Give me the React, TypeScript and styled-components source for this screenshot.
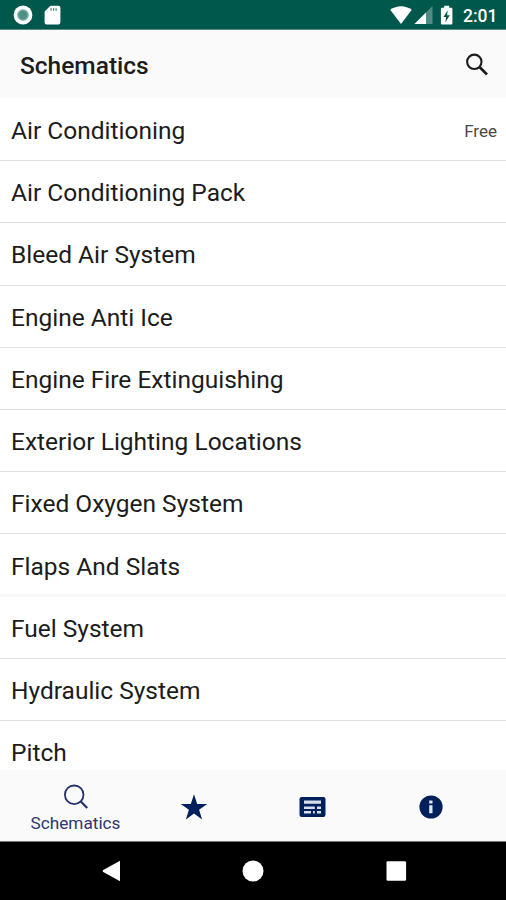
import React from "react";
import styled, { createGlobalStyle } from "styled-components";

const GlobalStyle = createGlobalStyle`
  * { box-sizing: border-box; }
  body { margin: 0; background: #fff; font-family: Roboto, "Noto Sans", sans-serif; }
`;

const Screen = styled.div`
  width: 506px;
  height: 900px;
  display: flex;
  flex-direction: column;
  overflow: hidden;
  background: #fff;
  color: #1c1c1c;
`;

const StatusBar = styled.header`
  flex: 0 0 30px;
  display: flex;
  align-items: center;
  justify-content: space-between;
  padding: 0 10px 0 13px;
  background: #00574b;
  border-bottom: 1px solid #5d8e86;
  color: #fff;
`;

const StatusGroup = styled.div<{ $gap: number }>`
  display: flex;
  align-items: center;
  gap: ${(p) => p.$gap}px;
  svg { display: block; }
`;

const Clock = styled.time`
  width: 33px;
  margin-left: 7px;
  padding-top: 2px;
  font-size: 17.5px;
  font-weight: 500;
  line-height: 20px;
  white-space: nowrap;
`;

const AppBar = styled.div`
  flex: 0 0 68px;
  display: flex;
  align-items: center;
  justify-content: space-between;
  padding: 3px 17px 0 20px;
  background: #fafafa;
`;

const Title = styled.h1`
  margin: 0;
  font-size: 24.5px;
  font-weight: 500;
  line-height: 32px;
`;

const IconButton = styled.button`
  display: flex;
  padding: 0;
  margin-top: -2px;
  border: 0;
  background: none;
  color: #1c1c1c;
`;

const List = styled.ul`
  flex: 1 1 0;
  min-height: 0;
  margin: 0;
  padding: 1px 0 0;
  overflow: hidden;
  list-style: none;
`;

const Row = styled.li<{ $soft?: boolean }>`
  display: flex;
  align-items: center;
  justify-content: space-between;
  height: 62.2px;
  padding: ${(p) => (p.$soft ? "6px" : "3px")} 9px 0 11px;
  border-bottom: ${(p) => (p.$soft ? "3px solid #f7f7f7" : "1px solid #e0e0e0")};
  font-size: 24.5px;
  line-height: 32px;
`;

const Name = styled.span`
  white-space: nowrap;
`;

const Tag = styled.span`
  font-size: 17px;
  color: #484848;
`;

const TabBar = styled.nav`
  flex: 0 0 72px;
  display: grid;
  grid-template-columns: 151px 86px 151px 86px;
  background: #fafafa;
  border-bottom: 1px solid #777;
`;

const Tab = styled.button<{ $active?: boolean }>`
  display: flex;
  flex-direction: column;
  align-items: center;
  justify-content: center;
  gap: 3px;
  padding: ${(p) => (p.$active ? "6px" : "2px")} 0 0;
  border: 0;
  background: none;
  color: #00205b;
  font-family: inherit;
  svg { display: block; }
`;

const TabLabel = styled.span`
  font-size: 17.2px;
  line-height: 20px;
  color: #2c386f;
`;

const SystemBar = styled.footer`
  flex: 0 0 58px;
  display: grid;
  grid-template-columns: 182px 142px 182px;
  align-items: center;
  background: #000;
`;

const SystemKey = styled.div<{ $side?: "left" | "right" }>`
  display: flex;
  justify-content: ${(p) => (p.$side === "left" ? "flex-end" : p.$side === "right" ? "flex-start" : "center")};
  padding: ${(p) => (p.$side === "left" ? "0 61px 0 0" : p.$side === "right" ? "0 0 0 62px" : "0")};
`;

const items: { name: string; tag?: string; soft?: boolean }[] = [
  { name: "Air Conditioning", tag: "Free" },
  { name: "Air Conditioning Pack" },
  { name: "Bleed Air System" },
  { name: "Engine Anti Ice" },
  { name: "Engine Fire Extinguishing" },
  { name: "Exterior Lighting Locations" },
  { name: "Fixed Oxygen System" },
  { name: "Flaps And Slats", soft: true },
  { name: "Fuel System" },
  { name: "Hydraulic System" },
  { name: "Pitch" },
];

export default function App() {
  return (
    <>
      <GlobalStyle />
      <Screen>
        <StatusBar>
          <StatusGroup $gap={11}>
            <svg width="20" height="20" viewBox="0 0 20 20">
              <circle cx="10" cy="10" r="9.4" fill="#fff" />
              <circle cx="10" cy="10" r="5.8" fill="#76aaa1" />
              <circle cx="10" cy="10" r="4.2" fill="#4d9184" />
            </svg>
            <svg width="17" height="20" viewBox="0 0 17 20">
              <path d="M6.5.8h8A2 2 0 0 1 16.4 2.8v14.6a2 2 0 0 1-2 2H2.6a2 2 0 0 1-2-2V6.5z" fill="#fff" />
              <path d="M6.4 3.2h1.3v2.6H6.4zM9 3.2h1.3v2.6H9zM11.5 3.2h1.3v2.6h-1.3z" fill="#4e897f" />
            </svg>
          </StatusGroup>
          <StatusGroup $gap={2}>
            <svg width="22" height="20" viewBox="0 0 22 20">
              <path d="M.2 4.8C6.5.1 15.5.1 21.8 4.8L11 19z" fill="#fff" />
            </svg>
            <svg width="19" height="20" viewBox="0 0 19 20">
              <path d="M18.5 1v18H.5z" fill="#4d8d83" />
              <path d="M12 7.5V19H.5z" fill="#fff" />
            </svg>
            <svg width="19" height="20" viewBox="0 0 19 20">
              <path d="M9.2.8h5v2h2a1.2 1.2 0 0 1 1.2 1.2v14.2a1.2 1.2 0 0 1-1.2 1.2H7.1a1.2 1.2 0 0 1-1.2-1.2V4a1.2 1.2 0 0 1 1.2-1.2h2.1z" fill="#fff" />
              <path d="M12.7 5.2 8.5 12h2.6l-.7 5.2 4.4-7h-2.7z" fill="#00574b" />
            </svg>
            <Clock>2:01</Clock>
          </StatusGroup>
        </StatusBar>
        <AppBar>
          <Title>Schematics</Title>
          <IconButton aria-label="Search">
            <svg width="24" height="24" viewBox="0 0 24 24" fill="none" stroke="currentColor">
              <circle cx="9.3" cy="8.8" r="7.2" strokeWidth="2.1" />
              <path d="m14.3 13.8 7.7 7.7" strokeWidth="2.7" />
            </svg>
          </IconButton>
        </AppBar>
        <List>
          {items.map((item) => (
            <Row key={item.name} $soft={item.soft}>
              <Name>{item.name}</Name>
              {item.tag && <Tag>{item.tag}</Tag>}
            </Row>
          ))}
        </List>
        <TabBar>
          <Tab $active>
            <svg width="26" height="26" viewBox="0 0 26 26" fill="none" stroke="#25316b">
              <circle cx="11.2" cy="10.8" r="9.3" strokeWidth="1.8" />
              <path d="m17.8 17.4 6.4 6.5" strokeWidth="2.2" />
            </svg>
            <TabLabel>Schematics</TabLabel>
          </Tab>
          <Tab aria-label="Favorites">
            <svg width="28" height="26" viewBox="0 0 28 26">
              <path d="m14 .3 3.2 9.6h10L19.1 15.8l3 9.6L14 19.5l-8.1 5.9 3-9.6L.8 9.9h10z" fill="currentColor" />
            </svg>
          </Tab>
          <Tab aria-label="News">
            <svg width="27" height="20" viewBox="0 0 27 20">
              <rect x=".5" width="26" height="20" rx="2.2" fill="currentColor" />
              <path d="M5 3.5h17v3.2H5zM5 9.4h10.8V12H5zM18 9.4h4V12h-4zM5 14h7v2.5H5zM14 14h1.8v2.5H14zM18 14h4v2.5h-4z" fill="#d9deed" />
            </svg>
          </Tab>
          <Tab aria-label="Information">
            <svg width="24" height="24" viewBox="0 0 24 24">
              <circle cx="12" cy="12" r="11.6" fill="currentColor" />
              <path d="M10.2 5.5h3.3v3h-3.3zM10.2 10.3h3.3v8h-3.3z" fill="#e2e6f1" />
            </svg>
          </Tab>
        </TabBar>
        <SystemBar>
          <SystemKey $side="left">
            <svg width="19" height="22" viewBox="0 0 19 22">
              <path d="M18 .8v20.4L.8 11.8v-1.6z" fill="#fff" />
            </svg>
          </SystemKey>
          <SystemKey>
            <svg width="22" height="22" viewBox="0 0 22 22">
              <circle cx="11" cy="11" r="10.5" fill="#fff" />
            </svg>
          </SystemKey>
          <SystemKey $side="right">
            <svg width="21" height="20" viewBox="0 0 21 20">
              <rect x=".5" y=".3" width="19.6" height="19.4" rx="1.3" fill="#fff" />
            </svg>
          </SystemKey>
        </SystemBar>
      </Screen>
    </>
  );
}
